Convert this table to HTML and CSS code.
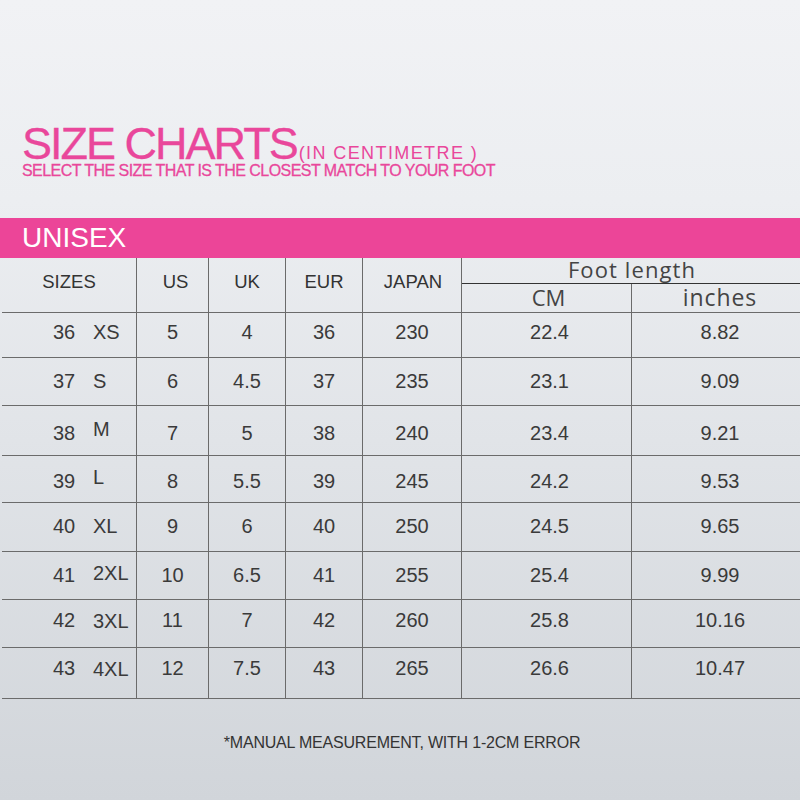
FILE: index.html
```html
<!DOCTYPE html>
<html>
<head>
<meta charset="utf-8">
<link rel="stylesheet" href="styles.css">
</head>
<body>
<div class="page">
  <div class="title">
    <span class="title-main">SIZE CHARTS</span><span class="title-unit">(IN CENTIMETRE )</span>
  </div>
  <div class="subtitle">SELECT THE SIZE THAT IS THE CLOSEST MATCH TO YOUR FOOT</div>
  <div class="band">UNISEX</div>
  <div class="table">
    <div class="head">
      <div class="hc c-sizes">SIZES</div>
      <div class="hc c-us">US</div>
      <div class="hc c-uk">UK</div>
      <div class="hc c-eur">EUR</div>
      <div class="hc c-jp">JAPAN</div>
      <div class="hc-foot">Foot length</div>
      <div class="hc-sub hc-cm">CM</div>
      <div class="hc-sub hc-in">inches</div>
    </div>
    <div class="row"><div class="cell sz"><span class="num">36</span><span class="lbl">XS</span></div><div class="cell">5</div><div class="cell">4</div><div class="cell">36</div><div class="cell">230</div><div class="cell shift">22.4</div><div class="cell shift last">8.82</div></div>
    <div class="row"><div class="cell sz"><span class="num">37</span><span class="lbl">S</span></div><div class="cell">6</div><div class="cell">4.5</div><div class="cell">37</div><div class="cell">235</div><div class="cell shift">23.1</div><div class="cell shift last">9.09</div></div>
    <div class="row"><div class="cell sz"><span class="num">38</span><span class="lbl up">M</span></div><div class="cell">7</div><div class="cell">5</div><div class="cell">38</div><div class="cell">240</div><div class="cell shift">23.4</div><div class="cell shift last">9.21</div></div>
    <div class="row"><div class="cell sz"><span class="num">39</span><span class="lbl up">L</span></div><div class="cell">8</div><div class="cell">5.5</div><div class="cell">39</div><div class="cell">245</div><div class="cell shift">24.2</div><div class="cell shift last">9.53</div></div>
    <div class="row"><div class="cell sz"><span class="num">40</span><span class="lbl">XL</span></div><div class="cell">9</div><div class="cell">6</div><div class="cell">40</div><div class="cell">250</div><div class="cell shift">24.5</div><div class="cell shift last">9.65</div></div>
    <div class="row"><div class="cell sz"><span class="num">41</span><span class="lbl up2">2XL</span></div><div class="cell">10</div><div class="cell">6.5</div><div class="cell">41</div><div class="cell">255</div><div class="cell shift">25.4</div><div class="cell shift last">9.99</div></div>
    <div class="row"><div class="cell sz"><span class="num">42</span><span class="lbl dn">3XL</span></div><div class="cell">11</div><div class="cell">7</div><div class="cell">42</div><div class="cell">260</div><div class="cell shift">25.8</div><div class="cell shift last">10.16</div></div>
    <div class="row"><div class="cell sz"><span class="num">43</span><span class="lbl dn">4XL</span></div><div class="cell">12</div><div class="cell">7.5</div><div class="cell">43</div><div class="cell">265</div><div class="cell shift">26.6</div><div class="cell shift last">10.47</div></div>
  </div>
  <div class="note">*MANUAL MEASUREMENT, WITH 1-2CM ERROR</div>
</div>
</body>
</html>
```

FILE: styles.css
```css
* { box-sizing: border-box; }
html, body { margin: 0; padding: 0; }
body {
  font-family: "Liberation Sans", Arial, sans-serif;
}
.page {
  width: 800px;
  height: 800px;
  overflow: hidden;
  background: linear-gradient(to bottom, #f1f2f5 0%, #eceef1 25%, #e1e4e8 55%, #d1d5da 100%);
  padding-top: 125px;
}
.title {
  padding-left: 22px;
  line-height: 38px;
  height: 38px;
  color: #e9479b;
  white-space: nowrap;
}
.title-main {
  font-size: 45px;
  letter-spacing: -2px;
  -webkit-text-stroke: 0.3px #e9479b;
}
.title-unit {
  font-size: 18px;
  letter-spacing: 1.4px;
  line-height: 18px;
  margin-left: 2px;
}
.subtitle {
  padding-left: 22px;
  font-size: 16px;
  line-height: 16px;
  letter-spacing: -0.55px;
  color: #e9479b;
  white-space: nowrap;
  -webkit-text-stroke: 0.3px #e9479b;
}
.band {
  margin-top: 39px;
  height: 40px;
  line-height: 40px;
  background: #ec4598;
  color: #ffffff;
  font-size: 28px;
  padding-left: 22px;
}
.table {
  margin-left: 2px;
  width: 798px;
  color: #3a3a3a;
}
.head {
  display: grid;
  grid-template-columns: 135px 72px 77px 77px 99px 170px 168px;
  grid-template-rows: 26px 29px;
  border-bottom: 1px solid #6b6b6b;
  height: 55px;
}
.hc {
  grid-row: 1 / 3;
  border-right: 1px solid #6b6b6b;
  text-align: center;
  font-size: 18.5px;
  line-height: 18px;
  padding-top: 15px;
  color: #333;
}
.c-sizes { grid-column: 1; }
.c-us { grid-column: 2; padding-left: 6px; }
.c-uk { grid-column: 3; }
.c-eur { grid-column: 4; }
.c-jp { grid-column: 5; padding-left: 2px; }
.hc-foot {
  grid-column: 6 / 8;
  grid-row: 1;
  border-bottom: 1px solid #333;
  font-family: "Open Sans", "Noto Sans", sans-serif;
  font-size: 22px;
  letter-spacing: 1.1px;
  line-height: 22px;
  text-align: center;
  color: #444;
  padding-left: 2px;
}
.hc-sub {
  grid-row: 2;
  font-family: "Open Sans", "Noto Sans", sans-serif;
  font-size: 22px;
  line-height: 26px;
  text-align: center;
  color: #444;
  padding-left: 4px;
}
.hc-cm { grid-column: 6; border-right: 1px solid #6b6b6b; }
.hc-in { grid-column: 7; padding-left: 8px; font-size: 23px; letter-spacing: 0.9px; }

.row {
  display: grid;
  grid-template-columns: 135px 72px 77px 77px 99px 170px 168px;
  border-bottom: 1px solid #6b6b6b;
}
.row:nth-child(2) { height: 45px; }
.row:nth-child(3) { height: 48px; }
.row:nth-child(4) { height: 50px; }
.row:nth-child(5) { height: 47px; }
.row:nth-child(6) { height: 49px; }
.row:nth-child(7) { height: 48px; }
.row:nth-child(8) { height: 48px; }
.row:nth-child(9) { height: 51px; }

.cell {
  border-right: 1px solid #6b6b6b;
  text-align: center;
  font-size: 20px;
  line-height: 20px;
  padding-top: 13px;
}
.row:nth-child(2) .cell { padding-top: 9px; }
.row:nth-child(3) .cell { padding-top: 13px; }
.row:nth-child(4) .cell { padding-top: 17px; }
.row:nth-child(5) .cell { padding-top: 15px; }
.row:nth-child(6) .cell { padding-top: 13px; }
.row:nth-child(7) .cell { padding-top: 13px; }
.row:nth-child(8) .cell { padding-top: 10px; }
.row:nth-child(9) .cell { padding-top: 10px; }

.cell.last { border-right: none; }
.cell.shift { padding-left: 6px; }
.cell.last.shift { padding-left: 8px; }
.cell.sz {
  text-align: left;
  padding-left: 51px;
  display: flex;
  align-items: flex-start;
}
.num { display: inline-block; width: 40px; }
.lbl { display: inline-block; }
.lbl.up { transform: translateY(-4px); }
.lbl.up2 { transform: translateY(-2px); }
.lbl.dn { transform: translateY(1px); }

.note {
  margin-top: 36px;
  text-align: center;
  font-size: 16px;
  line-height: 16px;
  letter-spacing: -0.2px;
  color: #333;
  padding-left: 4px;
}
```
